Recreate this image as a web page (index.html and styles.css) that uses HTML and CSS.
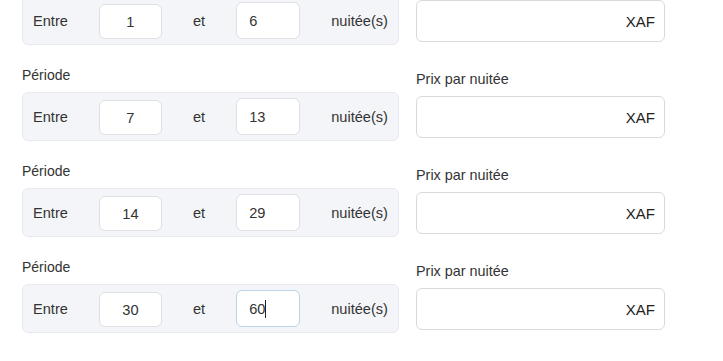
FILE: index.html
```html
<!DOCTYPE html>
<html lang="fr">
<head>
  <meta charset="UTF-8">
  <meta name="viewport" content="width=device-width, initial-scale=1.0">
  <title>Tarifs par période</title>
  <link rel="stylesheet" href="styles.css">
</head>
<body>

  <form class="tarifs">
    <!-- first row: labels scrolled out of view -->
    <div class="tarif-row first">
      <div class="periode">
        <div class="periode-box">
          <span>Entre</span>
          <input type="text" class="nb-min" value="1">
          <span>et</span>
          <input type="text" class="nb-max" value="6">
          <span>nuitée(s)</span>
        </div>
      </div>
      <div class="prix">
        <div class="prix-box">
          <input type="text" class="prix-input">
          <span class="devise">XAF</span>
        </div>
      </div>
    </div>

    <div class="tarif-row">
      <div class="periode">
        <label class="field-label">Période</label>
        <div class="periode-box">
          <span>Entre</span>
          <input type="text" class="nb-min" value="7">
          <span>et</span>
          <input type="text" class="nb-max" value="13">
          <span>nuitée(s)</span>
        </div>
      </div>
      <div class="prix">
        <label class="field-label">Prix par nuitée</label>
        <div class="prix-box">
          <input type="text" class="prix-input">
          <span class="devise">XAF</span>
        </div>
      </div>
    </div>

    <div class="tarif-row">
      <div class="periode">
        <label class="field-label">Période</label>
        <div class="periode-box">
          <span>Entre</span>
          <input type="text" class="nb-min" value="14">
          <span>et</span>
          <input type="text" class="nb-max" value="29">
          <span>nuitée(s)</span>
        </div>
      </div>
      <div class="prix">
        <label class="field-label">Prix par nuitée</label>
        <div class="prix-box">
          <input type="text" class="prix-input">
          <span class="devise">XAF</span>
        </div>
      </div>
    </div>

    <div class="tarif-row">
      <div class="periode">
        <label class="field-label">Période</label>
        <div class="periode-box">
          <span>Entre</span>
          <input type="text" class="nb-min" value="30">
          <span>et</span>
          <div class="nb-max focused">60<span class="caret"></span></div>
          <span>nuitée(s)</span>
        </div>
      </div>
      <div class="prix">
        <label class="field-label">Prix par nuitée</label>
        <div class="prix-box">
          <input type="text" class="prix-input">
          <span class="devise">XAF</span>
        </div>
      </div>
    </div>
  </form>

</body>
</html>
```

FILE: styles.css
```css
body {
  margin: 0;
  font-family: "Liberation Sans", Arial, sans-serif;
  color: #333;
  background: #fff;
}

.tarifs {
  margin-top: -4px;
  padding-left: 22px;
  width: 643px;
}

.tarif-row {
  display: grid;
  grid-template-columns: 377px 249px;
  column-gap: 17px;
  margin-bottom: 20px;
}

.field-label {
  display: block;
  height: 20px;
  line-height: 20px;
  margin-bottom: 7px;
  font-size: 14px;
}

.prix .field-label {
  font-size: 14.4px;
}

.prix {
  padding-top: 4px;
}

.periode-box {
  display: flex;
  align-items: center;
  justify-content: space-between;
  height: 49px;
  box-sizing: border-box;
  padding: 0 10px;
  background: #f4f5f8;
  border: 1px solid #e7e9ee;
  border-radius: 6px;
  font-size: 14.6px;
}

.periode-box input,
.periode-box .nb-max {
  box-sizing: border-box;
  border: 1px solid #dfe0e3;
  border-radius: 6px;
  background: #fff;
  font-family: inherit;
  font-size: 14.6px;
  color: #333;
  outline: none;
}

.nb-min {
  width: 63px;
  height: 35px;
  margin-top: 2px;
  text-align: center;
}

.nb-max {
  width: 64px;
  height: 37px;
  padding-left: 12px;
}

div.nb-max {
  display: flex;
  align-items: center;
}

.nb-max.focused {
  border-color: #bcd3ea;
}

.caret {
  display: inline-block;
  width: 1px;
  height: 18px;
  background: #222;
}

.prix-box {
  display: flex;
  align-items: center;
  height: 42px;
  box-sizing: border-box;
  padding: 0 9px 0 12px;
  border: 1px solid #d9d9dc;
  border-radius: 6px;
  background: #fff;
}

.prix-input {
  flex: 1;
  min-width: 0;
  border: none;
  outline: none;
  font-family: inherit;
  font-size: 15px;
  background: transparent;
}

.devise {
  font-size: 15px;
  color: #222;
}
```
